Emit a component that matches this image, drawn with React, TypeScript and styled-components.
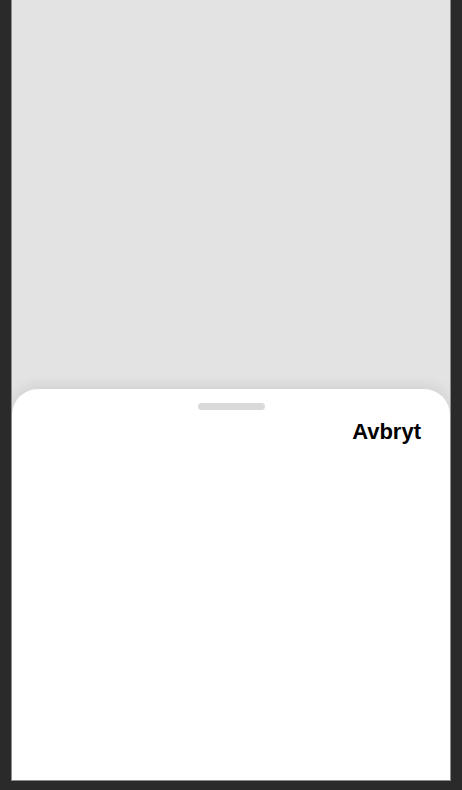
import styled, { createGlobalStyle } from "styled-components";

const GlobalStyle = createGlobalStyle`
  html, body {
    margin: 0;
    padding: 0;
    background: #2a2a2a;
  }
  body {
    font-family: "Liberation Sans", Arial, sans-serif;
  }
`;

function App() {
  return (
    <>
      <GlobalStyle />
      <StyledScreen>
        <StyledSheet>
          <StyledHandle />
          <StyledHeader>
            <StyledCancel type="button">Avbryt</StyledCancel>
          </StyledHeader>
        </StyledSheet>
      </StyledScreen>
    </>
  );
}

const StyledScreen = styled.div`
  box-sizing: border-box;
  margin: 0 11px;
  width: 440px;
  height: 781px;
  background-color: #e3e3e3;
  border: 1px solid #8c8c8c;
  border-top: 0;
  display: flex;
  flex-direction: column;
  justify-content: flex-end;
  overflow: hidden;
`;

const StyledSheet = styled.div`
  height: 391px;
  background-color: #ffffff;
  border-radius: 26px 26px 0 0;
  box-shadow: 0 -3px 14px rgba(0, 0, 0, 0.09);
  display: flex;
  flex-direction: column;
  align-items: center;
`;

const StyledHandle = styled.div`
  margin-top: 14px;
  width: 67px;
  height: 7px;
  border-radius: 4px;
  background-color: #dadada;
`;

const StyledHeader = styled.div`
  align-self: stretch;
  display: flex;
  justify-content: flex-end;
  padding: 9px 29px 0 0;
`;

const StyledCancel = styled.button`
  background: none;
  border: 0;
  padding: 0;
  color: #000000;
  font-family: "Liberation Sans", Arial, sans-serif;
  font-weight: 700;
  font-size: 22px;
  line-height: 26px;
  cursor: pointer;
`;

export default App;
